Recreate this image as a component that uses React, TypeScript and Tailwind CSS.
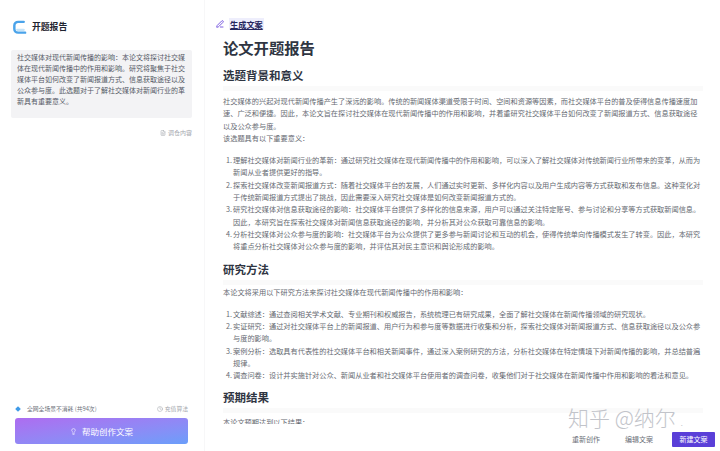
import { Clock, FileText, Lightbulb, PenLine } from 'lucide-react'

const reasons = [
  '理解社交媒体对新闻行业的革新：通过研究社交媒体在现代新闻传播中的作用和影响，可以深入了解社交媒体对传统新闻行业所带来的变革，从而为新闻从业者提供更好的指导。',
  '探索社交媒体改变新闻报道方式：随着社交媒体平台的发展，人们通过实时更新、多样化内容以及用户生成内容等方式获取和发布信息。这种变化对于传统新闻报道方式提出了挑战，因此需要深入研究社交媒体是如何改变新闻报道方式的。',
  '研究社交媒体对信息获取途径的影响：社交媒体平台提供了多样化的信息来源，用户可以通过关注特定账号、参与讨论和分享等方式获取新闻信息。因此，本研究旨在探索社交媒体对新闻信息获取途径的影响，并分析其对公众获取可靠信息的影响。',
  '分析社交媒体对公众参与度的影响：社交媒体平台为公众提供了更多参与新闻讨论和互动的机会，使得传统单向传播模式发生了转变。因此，本研究将重点分析社交媒体对公众参与度的影响，并评估其对民主意识和舆论形成的影响。',
]

const methods = [
  '文献综述：通过查阅相关学术文献、专业期刊和权威报告，系统梳理已有研究成果，全面了解社交媒体在新闻传播领域的研究现状。',
  '实证研究：通过对社交媒体平台上的新闻报道、用户行为和参与度等数据进行收集和分析，探索社交媒体对新闻报道方式、信息获取途径以及公众参与度的影响。',
  '案例分析：选取具有代表性的社交媒体平台和相关新闻事件，通过深入案例研究的方法，分析社交媒体在特定情境下对新闻传播的影响，并总结普遍规律。',
  '调查问卷：设计并实施针对公众、新闻从业者和社交媒体平台使用者的调查问卷，收集他们对于社交媒体在新闻传播中作用和影响的看法和意见。',
]

function NumberedList({ items }: { items: string[] }) {
  return (
    <ol className="flex flex-col">
      {items.map((text, i) => (
        <li key={i} className="flex">
          <span className="w-[10px] shrink-0 pl-[3px]">{i + 1}.</span>
          <span>{text}</span>
        </li>
      ))}
    </ol>
  )
}

function Heading({ children }: { children: string }) {
  return (
    <h2 className="border-b-[5px] border-[#fafafa] pb-[2px] text-[11.5px] leading-[18px] font-bold text-[#2f3542]">
      {children}
    </h2>
  )
}

export default function App() {
  return (
    <div className="relative flex h-[451px] w-[720px] overflow-hidden bg-white font-['Noto_Sans_CJK_SC',sans-serif]">
      {/* 左侧栏 */}
      <aside className="flex w-[205px] shrink-0 flex-col border-r border-[#f7f7f8] bg-white">
        <div className="flex h-[50px] items-center gap-[5px] pt-[3px] pl-[12px]">
          <svg viewBox="0 0 16 16" className="h-[16px] w-[15px]">
            <path d="M12.5 2.5H6.5A4 4 0 0 0 2.5 6.5V10a4 4 0 0 0 4 4H14" fill="none" stroke="#4aa3ea" strokeWidth="2.6" strokeLinecap="round" />
            <path d="M5.5 11h7" stroke="#c6e4f8" strokeWidth="2.4" strokeLinecap="round" />
          </svg>
          <span className="text-[8.8px] font-bold text-[#1f2430]">开题报告</span>
        </div>
        <div className="mr-[12px] ml-[11px] h-[68px] rounded-[2px] bg-[#f3f3f5] px-[6px] pt-[2px] text-[7px] leading-[11px] text-[#555a66]">
          社交媒体对现代新闻传播的影响：本论文将探讨社交媒体在现代新闻传播中的作用和影响。研究将聚焦于社交媒体平台如何改变了新闻报道方式、信息获取途径以及公众参与度。此选题对于了解社交媒体对新闻行业的革新具有重要意义。
        </div>
        <div className="mt-[10px] mr-[12px] flex items-center justify-end gap-[2px] text-[6px] text-[#a3a6ad]">
          <FileText className="h-[6px] w-[6px]" />
          <span>调仓内容</span>
        </div>
        <div className="mt-auto mr-[16px] ml-[15px] mb-[7px] flex flex-col gap-[5px]">
          <div className="flex items-center text-[5.8px] leading-[8px] text-[#6d717a]">
            <span className="ml-[1px] h-[4px] w-[4px] rotate-45 bg-[#3f9be8]" />
            <span className="ml-[7px]">全网全场景不消耗 (共94次)</span>
            <span className="ml-auto flex items-center gap-[2px] text-[#a3a6ad]">
              <Clock className="h-[6px] w-[6px]" />
              充值算法
            </span>
          </div>
          <button className="flex h-[26px] items-center justify-center gap-[5px] rounded-[3px] bg-gradient-to-br from-[#ad6cf0] to-[#6a9efa] text-[8.5px] text-white">
            <Lightbulb className="h-[7px] w-[7px]" />
            帮助创作文案
          </button>
        </div>
      </aside>

      {/* 右侧内容 */}
      <main className="flex min-w-0 flex-1 flex-col">
        <div className="flex h-[36px] shrink-0 items-end gap-[5px] pb-[6px] pl-[11px] text-[8.2px] leading-[12px] font-bold text-[#25265e]">
          <PenLine className="mb-[2px] h-[8px] w-[8px] text-[#7d5fe0]" strokeWidth={3} />
          <span className="bg-[#eeeefc] px-[1px] underline">生成文案</span>
        </div>
        <article className="h-[388px] shrink-0 overflow-hidden pr-[17px] pl-[18px] text-[7.2px] leading-[12.3px] text-[#666a72]">
          <h1 className="text-[15.3px] leading-[22px] font-bold text-[#2f3542]">论文开题报告</h1>
          <div className="mt-[8px]">
            <Heading>选题背景和意义</Heading>
          </div>
          <p className="mt-[4px]">
            社交媒体的兴起对现代新闻传播产生了深远的影响。传统的新闻媒体渠道受限于时间、空间和资源等因素，而社交媒体平台的普及使得信息传播速度加速、广泛和便捷。因此，本论文旨在探讨社交媒体在现代新闻传播中的作用和影响，并着重研究社交媒体平台如何改变了新闻报道方式、信息获取途径以及公众参与度。
          </p>
          <p>该选题具有以下重要意义：</p>
          <div className="mt-[10px]">
            <NumberedList items={reasons} />
          </div>
          <div className="mt-[7px]">
            <Heading>研究方法</Heading>
          </div>
          <p className="mt-[1px]">本论文将采用以下研究方法来探讨社交媒体在现代新闻传播中的作用和影响：</p>
          <div className="mt-[10px]">
            <NumberedList items={methods} />
          </div>
          <div className="mt-[6px]">
            <Heading>预期结果</Heading>
          </div>
          <p className="mt-[3px]">本论文预期达到以下结果：</p>
        </article>
        <footer className="flex flex-1 items-start justify-end bg-white pt-[8px] pr-[5px] text-[7px] text-[#6b6f78]">
          <button className="mr-[25px] h-[15px] leading-[15px]">重新创作</button>
          <button className="mr-[19px] h-[15px] leading-[15px]">编辑文案</button>
          <button className="h-[15px] w-[43px] rounded-[1px] bg-[#5a3fd8] leading-[15px] text-white">新建文案</button>
        </footer>
      </main>

      {/* 水印 */}
      <div className="absolute top-[402px] left-[568px] text-[21px] leading-[30px] font-light whitespace-nowrap text-[#c2c4ca]">
        知乎 @纳尔 <span className="text-[10px]">.</span>
      </div>
    </div>
  )
}
